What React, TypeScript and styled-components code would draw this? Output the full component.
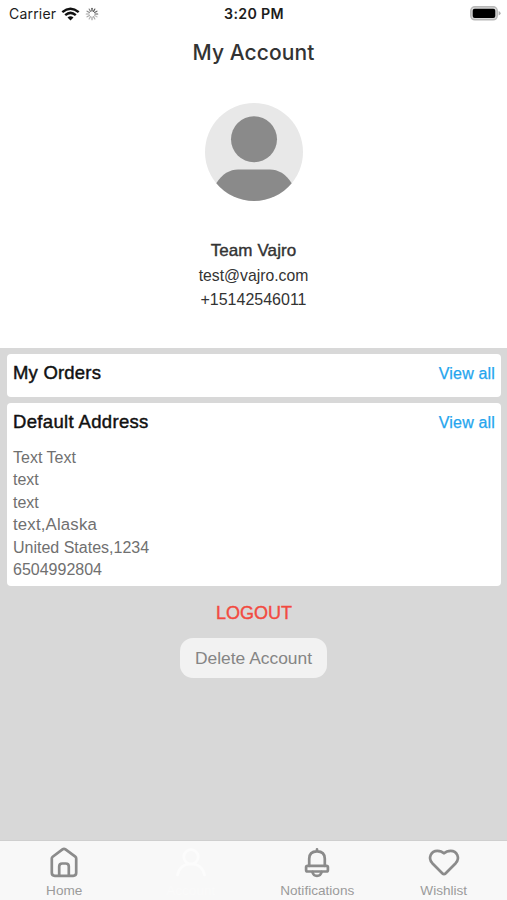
import React from 'react';
import styled, { createGlobalStyle } from 'styled-components';

const GlobalStyle = createGlobalStyle`
  * { box-sizing: border-box; }
  body { margin: 0; background: #d8d8d8; font-family: "Liberation Sans", Arial, sans-serif; }
  h1, h2, p { margin: 0; font-weight: 400; }
  button { border: 0; padding: 0; background: none; font-family: inherit; }
`;

const Screen = styled.div`
  width: 507px;
  height: 900px;
  display: flex;
  flex-direction: column;
  overflow: hidden;
  background: #d8d8d8;
`;

const StatusBar = styled.div`
  height: 28px;
  flex: none;
  display: grid;
  grid-template-columns: 1fr auto 1fr;
  align-items: center;
  padding: 0 6px 0 9px;
  background: #fff;
  font-family: Inter, sans-serif;
  color: #1c1c1c;
`;

const Carrier = styled.div`
  display: flex;
  align-items: center;
  font-size: 14px;
  line-height: 28px;
  letter-spacing: 0.2px;
  svg:first-of-type { margin-left: 5px; }
  svg:last-of-type { margin-left: 5px; }
`;

const Clock = styled.div`
  margin-right: 2px;
  font-size: 14.2px;
  font-weight: 600;
  line-height: 28px;
  letter-spacing: 0.32px;
`;

const BatterySlot = styled.div`
  display: flex;
  justify-content: flex-end;
  padding-bottom: 2px;
`;

const Profile = styled.section`
  height: 320px;
  flex: none;
  display: flex;
  flex-direction: column;
  align-items: center;
  background: #fff;
  color: #333;
`;

const Title = styled.h1`
  height: 75px;
  font: 500 21px/49px Inter, sans-serif;
  letter-spacing: 0.1px;
`;

const Person = styled.h2`
  margin-top: 37px;
  font-size: 17px;
  line-height: 26px;
  letter-spacing: 0.1px;
  -webkit-text-stroke: 0.4px currentColor;
`;

const Contact = styled.p<{ $size: number }>`
  font-size: ${p => p.$size}px;
  line-height: 24px;
`;

const Main = styled.main`
  flex: 1;
  display: flex;
  flex-direction: column;
  align-items: center;
  padding: 6px 6px 0 7px;
`;

const Card = styled.section<{ $height: number }>`
  align-self: stretch;
  height: ${p => p.$height}px;
  margin-bottom: 6px;
  padding: 0 6px;
  border-radius: 4px;
  background: #fff;
`;

const CardHead = styled.div`
  display: flex;
  justify-content: space-between;
  align-items: center;
  height: 38px;
`;

const CardTitle = styled.h2<{ $spacing: number }>`
  font-size: 18.5px;
  line-height: 38px;
  letter-spacing: ${p => p.$spacing}px;
  color: #111;
  -webkit-text-stroke: 0.45px currentColor;
`;

const Link = styled.button`
  padding-top: 2px;
  font-size: 16px;
  letter-spacing: 0.17px;
  color: #25a5ee;
  -webkit-text-stroke: 0.25px currentColor;
`;

const Address = styled.div`
  padding-top: 6px;
  font-size: 16px;
  line-height: 22.4px;
  color: #707070;
`;

const Region = styled.p`
  font-size: 16.8px;
  letter-spacing: 0.17px;
`;

const Logout = styled.button`
  margin-top: 8px;
  height: 26px;
  font-size: 18px;
  line-height: 26px;
  color: #f24a40;
  -webkit-text-stroke: 0.4px currentColor;
`;

const DeleteButton = styled.button`
  width: 147px;
  height: 40px;
  margin: 12px 1px 0 0;
  border-radius: 13px;
  background: #f2f2f2;
  color: #858585;
  font-size: 17.4px;
`;

const TabBar = styled.nav`
  height: 60px;
  flex: none;
  display: grid;
  grid-template-columns: repeat(4, 1fr);
  padding-left: 1px;
  border-top: 1px solid #cfcfcf;
  background: #f8f8f8;
`;

const Tab = styled.button<{ $active?: boolean }>`
  display: flex;
  flex-direction: column;
  align-items: center;
  padding-top: 5px;
  color: ${p => (p.$active ? '#fafafa' : '#9b9b9b')};
  font-size: 13.6px;
  line-height: 16px;
  svg { color: ${p => (p.$active ? '#fcfcfc' : '#8b8b8b')}; }
  span { margin-top: 3px; }
`;

const WifiIcon = () => (
  <svg width="19" height="14" viewBox="0 0 19 14" fill="none" stroke="#111" strokeWidth="2.5">
    <path d="M1.3 5.1Q9.5-1.7 17.7 5.1" />
    <path d="M4.2 8.1Q9.5 3.6 14.8 8.1" />
    <path d="M9.5 13.4L6.5 10.5Q9.5 8.1 12.5 10.5Z" fill="#111" stroke="none" />
  </svg>
);

const SPOKES = [1, 0.9, 0.8, 0.9, 0.35, 0.45, 0.5, 0.4, 0.45, 0.5, 0.6, 0.65];

const Spinner = () => (
  <svg width="14" height="14" viewBox="-7 -7 14 14" stroke="#444" strokeWidth="1.2" strokeLinecap="round">
    {SPOKES.map((opacity, i) => (
      <line key={i} y1="-3" y2="-5.7" opacity={opacity} transform={`rotate(${i * 30})`} />
    ))}
  </svg>
);

const Battery = () => (
  <svg width="31" height="15" viewBox="0 0 31 15">
    <rect x="0.8" y="0.8" width="26.4" height="13" rx="4" fill="#d8d8d8" stroke="#b8b8b8" strokeWidth="1.5" />
    <rect x="2.7" y="2.7" width="22.6" height="9.3" rx="2" fill="#000" />
    <path d="M28.6 5.1Q30.6 6 30.6 7.3T28.6 9.5Z" fill="#adadad" />
  </svg>
);

const AvatarSvg = styled.svg`
  flex: none;
`;

const Avatar = () => (
  <AvatarSvg width="98" height="98" viewBox="0 0 98 98">
    <circle cx="49" cy="49" r="49" fill="#e8e8e8" />
    <circle cx="49" cy="36.3" r="23" fill="#8a8a8a" />
    <path d="M11.3 80.3C17 71 25 66.6 33 66.6H65C73 66.6 81 71 86.7 80.3A49 49 0 0 1 11.3 80.3Z" fill="#8a8a8a" />
  </AvatarSvg>
);

const TabIcon = ({ children }: { children: React.ReactNode }) => (
  <svg width="34" height="34" viewBox="0 0 34 34" fill="none" stroke="currentColor" strokeWidth="2.7" strokeLinecap="round" strokeLinejoin="round">
    {children}
  </svg>
);

export default function App() {
  return (
    <>
      <GlobalStyle />
      <Screen>
        <StatusBar>
          <Carrier>Carrier<WifiIcon /><Spinner /></Carrier>
          <Clock>3:20 PM</Clock>
          <BatterySlot><Battery /></BatterySlot>
        </StatusBar>
        <Profile>
          <Title>My Account</Title>
          <Avatar />
          <Person>Team Vajro</Person>
          <Contact $size={15.75}>test@vajro.com</Contact>
          <Contact $size={16}>+15142546011</Contact>
        </Profile>
        <Main>
          <Card $height={43}>
            <CardHead><CardTitle $spacing={0.2}>My Orders</CardTitle><Link>View all</Link></CardHead>
          </Card>
          <Card $height={183}>
            <CardHead><CardTitle $spacing={0.34}>Default Address</CardTitle><Link>View all</Link></CardHead>
            <Address>
              <p>Text Text</p>
              <p>text</p>
              <p>text</p>
              <Region>text,Alaska</Region>
              <p>United States,1234</p>
              <p>6504992804</p>
            </Address>
          </Card>
          <Logout>LOGOUT</Logout>
          <DeleteButton>Delete Account</DeleteButton>
        </Main>
        <TabBar>
          <Tab>
            <TabIcon>
              <path d="M4.8 12.5Q4.8 11.4 5.7 10.7L15.5 3.4Q17 2.3 18.5 3.4L28.3 10.7Q29.2 11.4 29.2 12.5V26.8Q29.2 29.8 26.2 29.8H7.8Q4.8 29.8 4.8 26.8Z" />
              <path d="M12.2 29.5V20.5Q12.2 17.5 15.2 17.5H18.8Q21.8 17.5 21.8 20.5V29.5" />
            </TabIcon>
            <span>Home</span>
          </Tab>
          <Tab $active>
            <TabIcon>
              <circle cx="17" cy="10.8" r="7.2" />
              <path d="M3.5 29C5 22 10 18 17 18S29 22 30.5 29" />
            </TabIcon>
            <span>Account</span>
          </Tab>
          <Tab>
            <TabIcon>
              <path d="M17 3.4V5M9.2 19.8V12.8Q9.2 5.4 17 5.4T24.8 12.8V19.8" />
              <path d="M7.6 19.8H26.4Q27.9 19.8 27.9 21.3V24Q27.9 25.5 26.4 25.5H7.6Q6.1 25.5 6.1 24V21.3Q6.1 19.8 7.6 19.8Z" />
              <path d="M12.4 26Q13.4 29.9 17 29.9T21.6 26" />
            </TabIcon>
            <span>Notifications</span>
          </Tab>
          <Tab>
            <TabIcon>
              <path d="M17 28.2Q16.2 28.2 15.5 27.5L5.3 17.2C.5 11.8 4.2 4.8 10.3 4.8Q14.4 4.8 17 7.4Q19.6 4.8 23.7 4.8C29.8 4.8 33.5 11.8 28.7 17.2L18.5 27.5Q17.8 28.2 17 28.2Z" />
            </TabIcon>
            <span>Wishlist</span>
          </Tab>
        </TabBar>
      </Screen>
    </>
  );
}
